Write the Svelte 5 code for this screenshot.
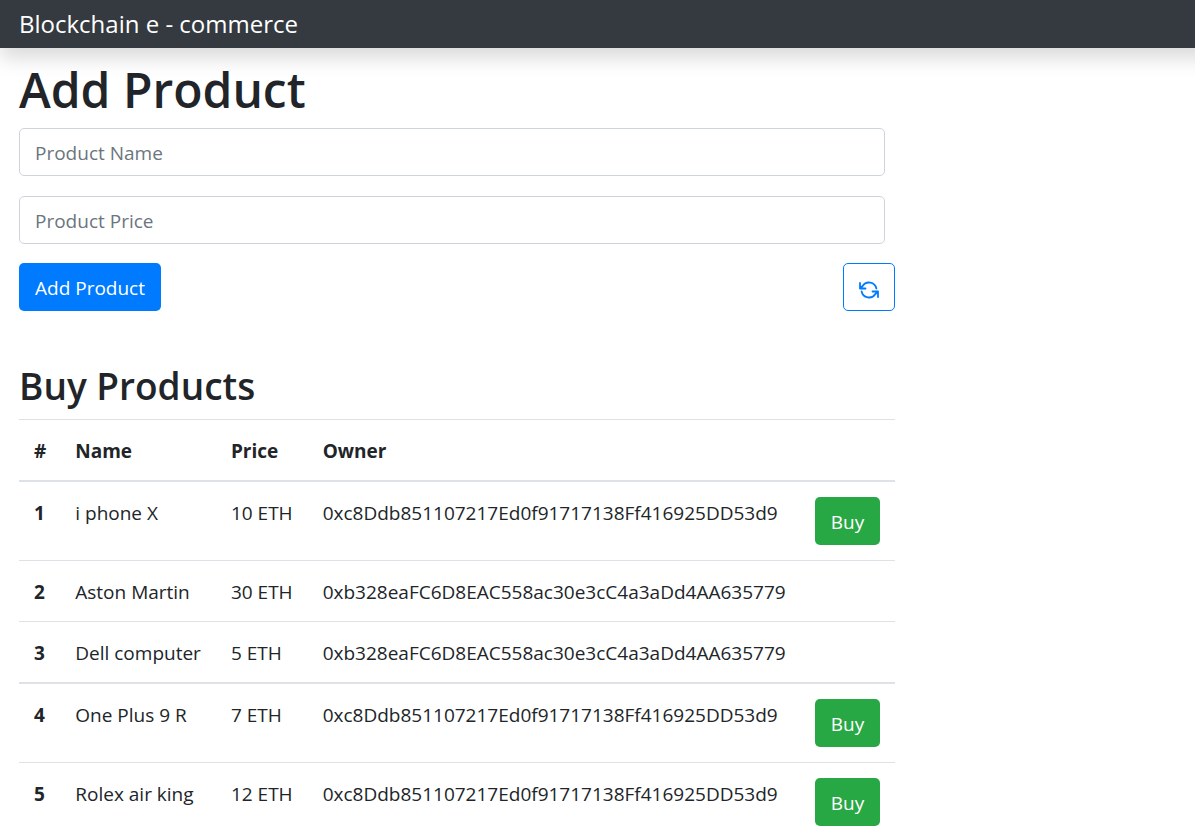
<script>
  const buyer = '0xc8Ddb851107217Ed0f91717138Ff416925DD53d9';
  const seller = '0xb328eaFC6D8EAC558ac30e3cC4a3aDd4AA635779';

  let name = $state('');
  let price = $state('');
  let products = $state([
    { id: 1, name: 'i phone X', price: 10, owner: buyer, forSale: true },
    { id: 2, name: 'Aston Martin', price: 30, owner: seller, forSale: false },
    { id: 3, name: 'Dell computer', price: 5, owner: seller, forSale: false },
    { id: 4, name: 'One Plus 9 R', price: 7, owner: buyer, forSale: true },
    { id: 5, name: 'Rolex air king', price: 12, owner: buyer, forSale: true }
  ]);

  function addProduct(event) {
    event.preventDefault();
    if (!name || !price) return;
    products.push({ id: products.length + 1, name, price, owner: buyer, forSale: true });
    name = '';
    price = '';
  }

  function buy(product) {
    product.owner = seller;
    product.forSale = false;
  }
</script>

<nav class="navbar"><a class="brand" href="#top">Blockchain e - commerce</a></nav>

<main class="content">
  <h1>Add Product</h1>
  <form onsubmit={addProduct}>
    <div class="fields">
      <input type="text" placeholder="Product Name" aria-label="Product Name" bind:value={name} />
      <input type="text" placeholder="Product Price" aria-label="Product Price" bind:value={price} />
    </div>
    <div class="actions">
      <button class="btn primary" type="submit">Add Product</button>
      <button class="btn outline" type="button" aria-label="Refresh">
        <svg viewBox="0 0 20 18" width="20" height="18" fill="none" stroke="currentColor" stroke-width="1.8" stroke-linecap="round" stroke-linejoin="round" aria-hidden="true">
          <path d="M1 2v5.500h5.500M1 7.500L3.600 5A7.600 7.600 0 0 1 17.400 7.500" />
          <path d="M19 16v-5.500h-5.500M19 10.500L16.400 13A7.600 7.600 0 0 1 2.600 10.500" />
        </svg>
      </button>
    </div>
  </form>

  <h2>Buy Products</h2>
  <table>
    <thead>
      <tr>
        <th scope="col">#</th>
        <th scope="col">Name</th>
        <th scope="col">Price</th>
        <th scope="col">Owner</th>
        <td></td>
      </tr>
    </thead>
    <tbody>
      {#each products as product (product.id)}
        <tr>
          <th scope="row">{product.id}</th>
          <td>{product.name}</td>
          <td>{product.price} ETH</td>
          <td>{product.owner}</td>
          <td class="action">
            {#if product.forSale}
              <button class="btn success" type="button" onclick={() => buy(product)}>Buy</button>
            {/if}
          </td>
        </tr>
      {/each}
    </tbody>
  </table>
</main>

<style>
  :global(body) {
    background: #fff;
    color: #212529;
    font: 19px/30px "Open Sans", "Noto Sans", sans-serif;
    overflow: hidden;
  }
  * { box-sizing: border-box; }
  /* The bar runs past the right edge so its shadow only fades on the left. */
  .navbar {
    display: flex;
    align-items: center;
    height: 48px;
    margin-right: -20px;
    padding: 0 19px;
    background: #343a40;
    box-shadow: 0 10px 20px rgba(0, 0, 0, 0.15);
  }
  .brand { color: #fff; font-size: 24px; text-decoration: none; }
  .content { width: 75%; padding: 12px 1px 0 19px; }
  h1, h2 { margin: 0; font-weight: 600; }
  h1 { font-size: 48px; line-height: 60px; margin-bottom: 8px; }
  h2 { font-size: 37px; line-height: 48px; margin: 51px 0 9px; }
  .fields { display: grid; gap: 20px; padding-right: 10px; }
  input {
    width: 100%;
    height: 48px;
    padding: 9px 15px 7px;
    border: 1px solid #ced4da;
    border-radius: 5px;
    color: #495057;
    font: inherit;
  }
  input::placeholder { color: #6c757d; opacity: 1; }
  .actions { display: flex; justify-content: space-between; margin-top: 19px; }
  .btn {
    display: block;
    height: 48px;
    padding: 2px 15px 0;
    border: 1px solid transparent;
    border-radius: 5px;
    color: #fff;
    font: inherit;
    cursor: pointer;
  }
  .primary { background: #007bff; }
  .success { background: #28a745; }
  .outline {
    display: flex;
    align-items: center;
    padding-top: 6px;
    background: #fff;
    border-color: #007bff;
    color: #007bff;
  }
  table { width: 100%; border-collapse: collapse; white-space: nowrap; }
  th, td { padding: 16px 15px 14px; border-top: 1px solid #dee2e6; text-align: left; vertical-align: top; }
  th:first-child { padding-right: 14px; }
  td:last-child { padding: 15px 15px 15px 14px; }
  thead th, thead td { border-bottom: 2px solid #dee2e6; }
  tbody tr:nth-child(4) > * { border-top-width: 2px; }
</style>
